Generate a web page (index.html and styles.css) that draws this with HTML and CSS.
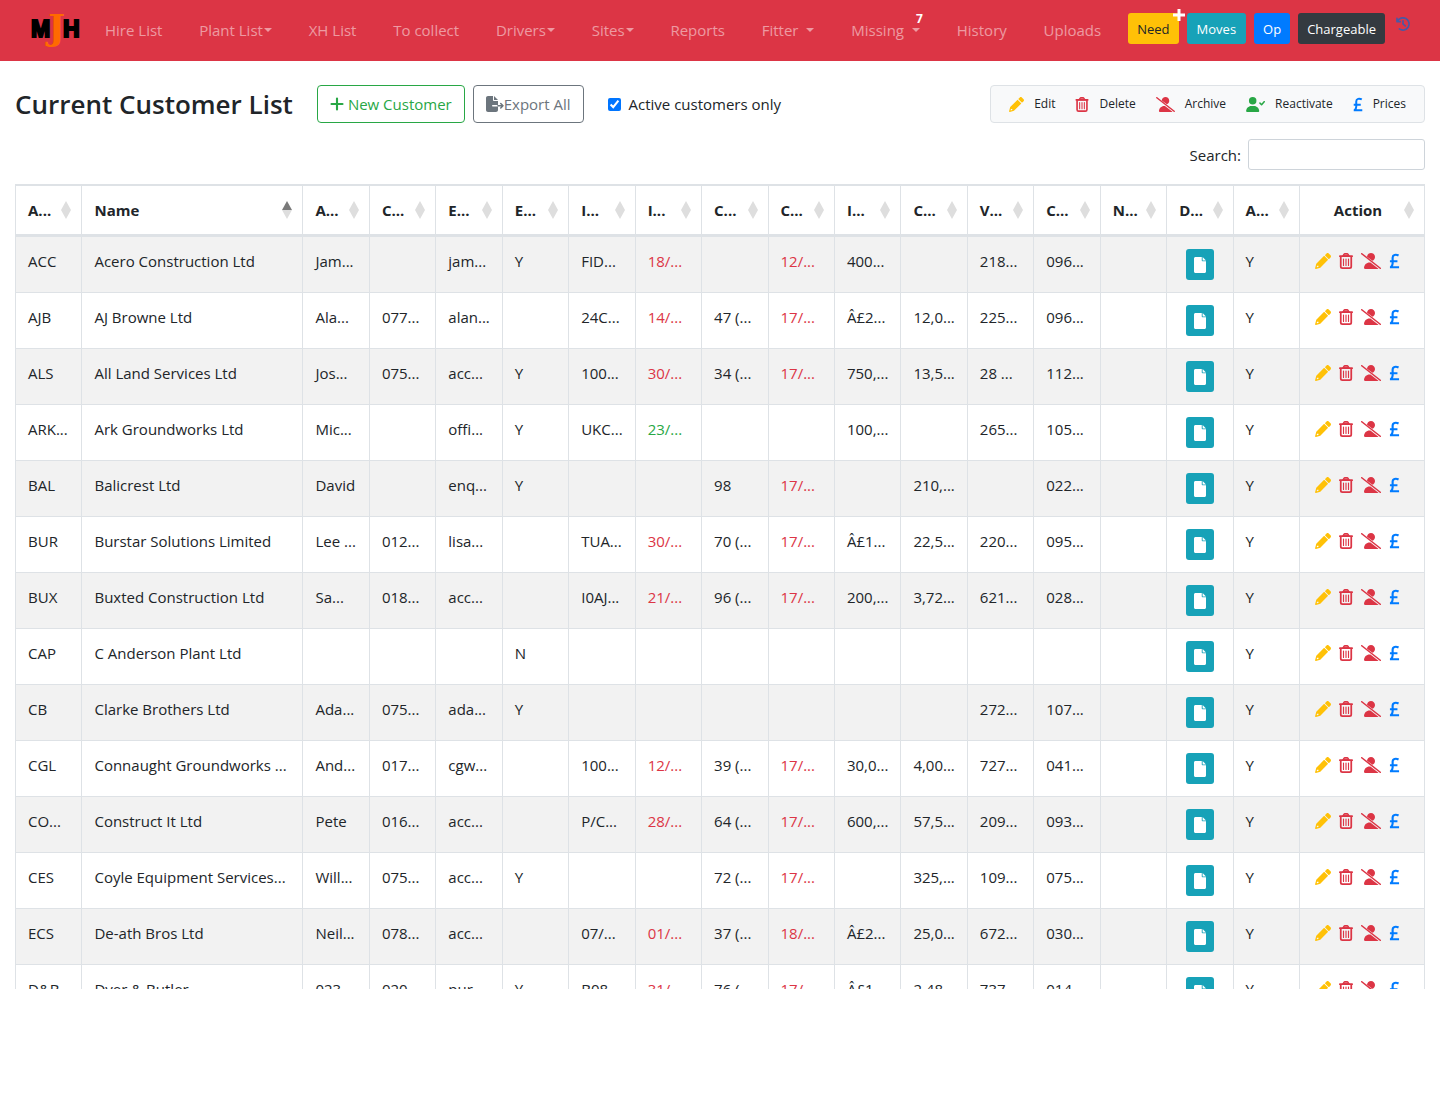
FILE: index.html
```html
<!DOCTYPE html>
<html lang="en">
<head>
  <meta charset="UTF-8" />
  <meta name="viewport" content="width=device-width, initial-scale=1" />
  <title>Current Customer List</title>
  <link rel="stylesheet" href="styles.css">
</head>
<body>
  <!-- icon set -->
  <svg class="sprite" aria-hidden="true">
    <symbol id="i-pencil" viewBox="0 0 512 512">
      <path fill="currentColor" d="M497.900 142.100l-46.100 46.100c-4.700 4.700-12.300 4.700-17 0l-111-111c-4.700-4.700-4.700-12.300 0-17l46.100-46.100c18.700-18.700 49.100-18.700 67.900 0l60.100 60.100c18.800 18.700 18.800 49.100 0 67.900zM284.200 99.800L41 343 2 484c-3 16 11 31 28 27l139-40 243.300-243.200c4.700-4.700 4.700-12.300 0-17l-111-111c-4.800-4.700-12.400-4.700-17.100 0zM88 408h24v24l-8 14-40 11-9-9 11-40z" fill-rule="evenodd"/>
    </symbol>
    <symbol id="i-trash" viewBox="0 0 448 512">
      <g fill="none" stroke="currentColor" stroke-linecap="round">
        <path stroke-width="56" d="M28 100h392M56 104v328a52 52 0 0 0 52 52h232a52 52 0 0 0 52-52V104"/>
        <path stroke-width="48" fill="currentColor" fill-opacity=".5" d="M128 92l36-56q8-12 20-12h80q12 0 20 12l36 56z"/>
        <path stroke-width="36" d="M144 190v210M224 190v210M304 190v210"/>
      </g>
    </symbol>
    <symbol id="i-user-slash" viewBox="0 0 640 512">
      <path fill="currentColor" d="M192 118C199 48 253 0 320 0c71 0 128 57 128 128 0 56-34 102-82 121zM96 482c0-99 80-178 178-178h27l256 201c-4 4-10 7-17 7H126c-17 0-30-13-30-30z"/>
      <path fill="none" stroke="currentColor" stroke-width="50" stroke-linecap="round" d="M24 24l592 464"/>
    </symbol>
    <symbol id="i-user-check" viewBox="0 0 640 512">
      <path fill="currentColor" d="M96 128a128 128 0 1 1 256 0 128 128 0 1 1-256 0M0 482c0-99 80-178 178-178h92c98 0 178 79 178 178 0 17-13 30-30 30H30c-17 0-30-13-30-30z"/>
      <path fill="none" stroke="currentColor" stroke-width="52" stroke-linecap="round" stroke-linejoin="round" d="M472 208l56 56 88-104"/>
    </symbol>
    <symbol id="i-pound" viewBox="0 0 320 512">
      <path fill="none" stroke="currentColor" stroke-width="68" stroke-linejoin="round" d="M290 82c-84-44-190-30-190 70v180q0 70-60 122M14 456h292M14 262h240"/>
    </symbol>
    <symbol id="i-plus" viewBox="0 0 448 512">
      <path fill="none" stroke="currentColor" stroke-width="68" stroke-linecap="round" d="M48 256h352M224 80v352"/>
    </symbol>
    <symbol id="i-plus-bold" viewBox="0 0 12 12">
      <path fill="none" stroke="currentColor" stroke-width="3" d="M0 6h12M6 0v12"/>
    </symbol>
    <symbol id="i-export" viewBox="0 0 576 512">
      <path fill="currentColor" d="M0 64C0 29 29 0 64 0h160v128c0 18 14 32 32 32h128v128H216a24 24 0 0 0 0 48h168v112c0 35-29 64-64 64H64c-35 0-64-29-64-64zM256 0l128 128H256z"/>
      <path fill="none" stroke="currentColor" stroke-width="48" stroke-linecap="round" stroke-linejoin="round" d="M384 312h160M472 240l72 72-72 72"/>
    </symbol>
    <symbol id="i-file" viewBox="0 0 384 512">
      <path fill="currentColor" d="M0 48C0 21 21 0 48 0h200v112c0 14 10 24 24 24h112v328c0 27-21 48-48 48H48c-27 0-48-21-48-48zM276 0l108 108H276z"/>
    </symbol>
    <symbol id="i-history" viewBox="0 0 512 512">
      <path fill="none" stroke="currentColor" stroke-width="60" stroke-linecap="round" stroke-linejoin="round" d="M36 50v120h120M50 160A224 224 0 1 1 122 436M256 136v120l80 72"/>
    </symbol>
    <symbol id="i-sort" viewBox="0 0 10 18">
      <path class="up" d="M5 0l5 9H0z"/>
      <path class="down" d="M0 9h10l-5 9z"/>
    </symbol>
  </svg>

  <nav class="navbar">
    <a class="brand" href="#" aria-label="MJH home">
      <svg width="52" height="44" viewBox="0 0 52 44">
        <g font-family="Liberation Sans" font-weight="700" font-size="23" stroke="#000" stroke-width="2">
          <text x="1" y="29">M</text>
          <text x="33" y="29">H</text>
        </g>
        <text x="18" y="32" font-family="DejaVu Serif" font-weight="700" font-size="36" fill="#ff6a00">J</text>
      </svg>
    </a>
    <div class="nav-links">
      <a href="#">Hire List</a>
      <a href="#" class="dropdown">Plant List</a>
      <a href="#">XH List</a>
      <a href="#">To collect</a>
      <a href="#" class="dropdown">Drivers</a>
      <a href="#" class="dropdown">Sites</a>
      <a href="#">Reports</a>
      <a href="#" class="dropdown spaced">Fitter</a>
      <a href="#" class="dropdown spaced">Missing<span class="count">7</span></a>
      <a href="#">History</a>
      <a href="#">Uploads</a>
    </div>
    <div class="nav-buttons">
      <button class="btn-sm need">Need<svg class="plus" width="12" height="12"><use href="#i-plus-bold"/></svg></button>
      <button class="btn-sm moves">Moves</button>
      <button class="btn-sm op">Op</button>
      <button class="btn-sm chargeable">Chargeable</button>
      <a href="#" class="history" aria-label="Recent"><svg width="14" height="14"><use href="#i-history"/></svg></a>
    </div>
  </nav>

  <main>
    <div class="toolbar">
      <h1>Current Customer List</h1>
      <button class="btn btn-new"><svg width="14" height="16"><use href="#i-plus"/></svg>New Customer</button>
      <button class="btn btn-export"><svg width="18" height="16"><use href="#i-export"/></svg>Export All</button>
      <label class="active-only"><input type="checkbox" checked>Active customers only</label>
      <div class="legend">
        <span class="edit"><svg width="15" height="15"><use href="#i-pencil"/></svg>Edit</span>
        <span class="delete"><svg width="14" height="15"><use href="#i-trash"/></svg>Delete</span>
        <span class="archive"><svg width="19" height="15"><use href="#i-user-slash"/></svg>Archive</span>
        <span class="reactivate"><svg width="19" height="15"><use href="#i-user-check"/></svg>Reactivate</span>
        <span class="prices"><svg width="10" height="15"><use href="#i-pound"/></svg>Prices</span>
      </div>
    </div>

    <div class="search">
      <label for="search">Search:</label>
      <input type="search" id="search">
    </div>

    <div class="table-wrap">
      <table>
        <colgroup>
          <col><col class="col-name"><col span="15"><col class="col-action">
        </colgroup>
        <thead><tr id="head"></tr></thead>
        <tbody id="customers"></tbody>
      </table>
    </div>
  </main>

  <script>
    const headings = ['A...', 'Name', 'A...', 'C...', 'E...', 'E...', 'I...', 'I...', 'C...', 'C...', 'I...', 'C...', 'V...', 'C...', 'N...', 'D...', 'A...', 'Action'];

    // acc, name, contact, phone, email, emailed, policy, expiry, credit, checked, insured, limit, vat, company
    const customers = [
      ['ACC', 'Acero Construction Ltd', 'Jam...', '', 'jam...', 'Y', 'FID...', '18/...', '', '12/...', '400...', '', '218...', '096...'],
      ['AJB', 'AJ Browne Ltd', 'Ala...', '077...', 'alan...', '', '24C...', '14/...', '47 (...', '17/...', 'Â£2...', '12,0...', '225...', '096...'],
      ['ALS', 'All Land Services Ltd', 'Jos...', '075...', 'acc...', 'Y', '100...', '30/...', '34 (...', '17/...', '750,...', '13,5...', '28 ...', '112...'],
      ['ARK...', 'Ark Groundworks Ltd', 'Mic...', '', 'offi...', 'Y', 'UKC...', '23/...', '', '', '100,...', '', '265...', '105...'],
      ['BAL', 'Balicrest Ltd', 'David', '', 'enq...', 'Y', '', '', '98', '17/...', '', '210,...', '', '022...'],
      ['BUR', 'Burstar Solutions Limited', 'Lee ...', '012...', 'lisa...', '', 'TUA...', '30/...', '70 (...', '17/...', 'Â£1...', '22,5...', '220...', '095...'],
      ['BUX', 'Buxted Construction Ltd', 'Sa...', '018...', 'acc...', '', 'I0AJ...', '21/...', '96 (...', '17/...', '200,...', '3,72...', '621...', '028...'],
      ['CAP', 'C Anderson Plant Ltd', '', '', '', 'N', '', '', '', '', '', '', '', ''],
      ['CB', 'Clarke Brothers Ltd', 'Ada...', '075...', 'ada...', 'Y', '', '', '', '', '', '', '272...', '107...'],
      ['CGL', 'Connaught Groundworks ...', 'And...', '017...', 'cgw...', '', '100...', '12/...', '39 (...', '17/...', '30,0...', '4,00...', '727...', '041...'],
      ['CO...', 'Construct It Ltd', 'Pete', '016...', 'acc...', '', 'P/C...', '28/...', '64 (...', '17/...', '600,...', '57,5...', '209...', '093...'],
      ['CES', 'Coyle Equipment Services...', 'Will...', '075...', 'acc...', 'Y', '', '', '72 (...', '17/...', '', '325,...', '109...', '075...'],
      ['ECS', 'De-ath Bros Ltd', 'Neil...', '078...', 'acc...', '', '07/...', '01/...', '37 (...', '18/...', 'Â£2...', '25,0...', '672...', '030...'],
      ['D&amp;B', 'Dyer &amp; Butler', '023...', '020...', 'pur...', 'Y', 'B08...', '31/...', '76 (...', '17/...', 'Â£1...', '2,48...', '737...', '014...']
    ];

    const icon = (name, w) => `<svg width="${w}" height="16"><use href="#i-${name}"/></svg>`;

    const actions = `
      <div class="actions">
        <a href="#" class="edit" title="Edit">${icon('pencil', 16)}</a>
        <a href="#" class="delete" title="Delete">${icon('trash', 14)}</a>
        <a href="#" class="archive" title="Archive">${icon('user-slash', 20)}</a>
        <a href="#" class="prices" title="Prices">${icon('pound', 11)}</a>
      </div>`;

    function cellClass(value, index) {
      if (index !== 7 && index !== 9) return '';
      return value === '23/...' ? 'valid' : 'expired';
    }

    document.getElementById('head').innerHTML = headings.map((h, i) => `
      <th class="${i === 1 ? 'sorted' : ''}"><div class="th-inner"><span>${h}</span><svg width="10" height="18"><use href="#i-sort"/></svg></div></th>
    `).join('');

    document.getElementById('customers').innerHTML = customers.map((c) => `
      <tr>
        ${c.map((v, i) => `<td class="${cellClass(v, i)}">${v}</td>`).join('')}
        <td></td>
        <td class="docs"><button class="doc-button" title="Documents">${icon('file', 12)}</button></td>
        <td>Y</td>
        <td>${actions}</td>
      </tr>
    `).join('');
  </script>
</body>
</html>
```

FILE: styles.css
```css
* {
  box-sizing: border-box;
}

body {
  margin: 0;
  font-family: 'Segoe UI', 'Open Sans', sans-serif;
  font-size: 15px;
  line-height: 24px;
  color: #212529;
  background: #fff;
}

a {
  text-decoration: none;
}

button,
input {
  font: inherit;
}

button {
  cursor: pointer;
}

svg {
  flex-shrink: 0;
}

.sprite {
  position: absolute;
  width: 0;
  height: 0;
}

/* Navbar */
.navbar {
  display: flex;
  align-items: center;
  height: 61px;
  padding: 0 30px 2px;
  background: #dc3545;
}

.brand {
  display: flex;
  margin-right: 23px;
}

.nav-links {
  display: flex;
  flex: 1;
  justify-content: space-between;
  margin-right: 27px;
}

.nav-links a {
  position: relative;
  color: rgba(255, 255, 255, 0.5);
  white-space: nowrap;
}

.dropdown::after {
  content: '';
  display: inline-block;
  margin-left: 1px;
  vertical-align: 4px;
  border-top: 4px solid;
  border-left: 4px solid transparent;
  border-right: 4px solid transparent;
}

.spaced::after {
  margin-left: 8px;
}

.count {
  position: absolute;
  top: -7px;
  right: -3px;
  line-height: 16px;
  font-size: 12px;
  font-weight: 700;
  color: #fff;
}

.nav-buttons {
  display: flex;
  gap: 8px;
  margin-bottom: 2px;
}

.btn-sm {
  position: relative;
  height: 31px;
  padding: 0 9px;
  border: 0;
  border-radius: 3px;
  font-size: 13px;
  color: #fff;
}

.need {
  background: #ffc107;
  color: #212529;
}

.plus {
  position: absolute;
  top: -4px;
  right: -6px;
  color: #fff;
}

.moves {
  padding: 0 10px;
  background: #17a2b8;
}

.op {
  background: #007bff;
}

.chargeable {
  background: #343a40;
}

.history {
  display: flex;
  margin: 4px 0 0 3px;
  color: #4759a5;
}

/* Toolbar */
main {
  padding: 24px 15px 0;
}

.toolbar {
  display: flex;
  align-items: center;
}

h1 {
  margin: 0 24px 0 0;
  font-size: 26px;
  font-weight: 600;
  line-height: 38px;
}

.btn {
  display: flex;
  align-items: center;
  height: 38px;
  margin-right: 8px;
  padding: 0 12px;
  border: 1px solid;
  border-radius: 4px;
  background: #fff;
}

.btn-new {
  gap: 4px;
  color: #28a745;
}

.btn-export {
  color: #6c757d;
}

.active-only {
  display: flex;
  align-items: center;
  gap: 8px;
  margin-left: 16px;
}

.active-only input {
  width: 13px;
  height: 13px;
  margin: 0;
}

.legend {
  display: flex;
  gap: 20px;
  margin-left: auto;
  padding: 6px 18px;
  border: 1px solid #dee2e6;
  border-radius: 4px;
  background: #f8f9fa;
  font-size: 12px;
}

.legend span {
  display: flex;
  align-items: center;
  gap: 10px;
}

.edit svg {
  color: #ffc107;
}

.delete svg,
.archive svg {
  color: #dc3545;
}

.reactivate svg {
  color: #28a745;
}

.prices svg {
  color: #007bff;
}

.search {
  display: flex;
  align-items: center;
  justify-content: flex-end;
  gap: 7px;
  margin: 16px 0 14px;
}

.search input {
  width: 177px;
  height: 31px;
  padding: 4px 8px;
  border: 1px solid #ced4da;
  border-radius: 3px;
}

/* Customer table */
.table-wrap {
  max-height: calc(100vh - 295px);
  overflow-y: auto;
  scrollbar-width: none;
}

table {
  width: 100%;
  table-layout: fixed;
  border-collapse: separate;
  border-spacing: 0;
  border-right: 1px solid #dee2e6;
}

.col-name {
  width: 221px;
}

.col-action {
  width: 125px;
}

th,
td {
  padding: 12px 0 12px 12px;
  border-left: 1px solid #dee2e6;
  text-align: left;
  vertical-align: top;
  white-space: nowrap;
  overflow: hidden;
}

th {
  border-top: 2px solid #dee2e6;
  border-bottom: 2px solid #dee2e6;
}

td {
  border-top: 1px solid #dee2e6;
}

tbody tr:nth-child(odd) {
  background: #f2f2f2;
}

.th-inner {
  display: flex;
  align-items: center;
  justify-content: space-between;
  padding-right: 10px;
}

th:last-child span {
  flex: 1;
  text-align: center;
}

.th-inner svg {
  --up: #dedede;
  fill: #dedede;
}

.sorted svg {
  --up: #7a7a7a;
}

.up {
  fill: var(--up);
}

.expired {
  color: #dc3545;
}

.valid {
  color: #28a745;
}

.docs {
  padding-left: 0;
  text-align: center;
}

.doc-button {
  display: inline-flex;
  align-items: center;
  justify-content: center;
  width: 28px;
  height: 31px;
  padding: 0;
  border: 0;
  border-radius: 3px;
  background: #17a2b8;
  color: #fff;
  vertical-align: top;
}

.actions {
  display: flex;
  align-items: center;
  gap: 8px;
  height: 24px;
  padding-left: 3px;
}

.actions a {
  display: flex;
}
```
